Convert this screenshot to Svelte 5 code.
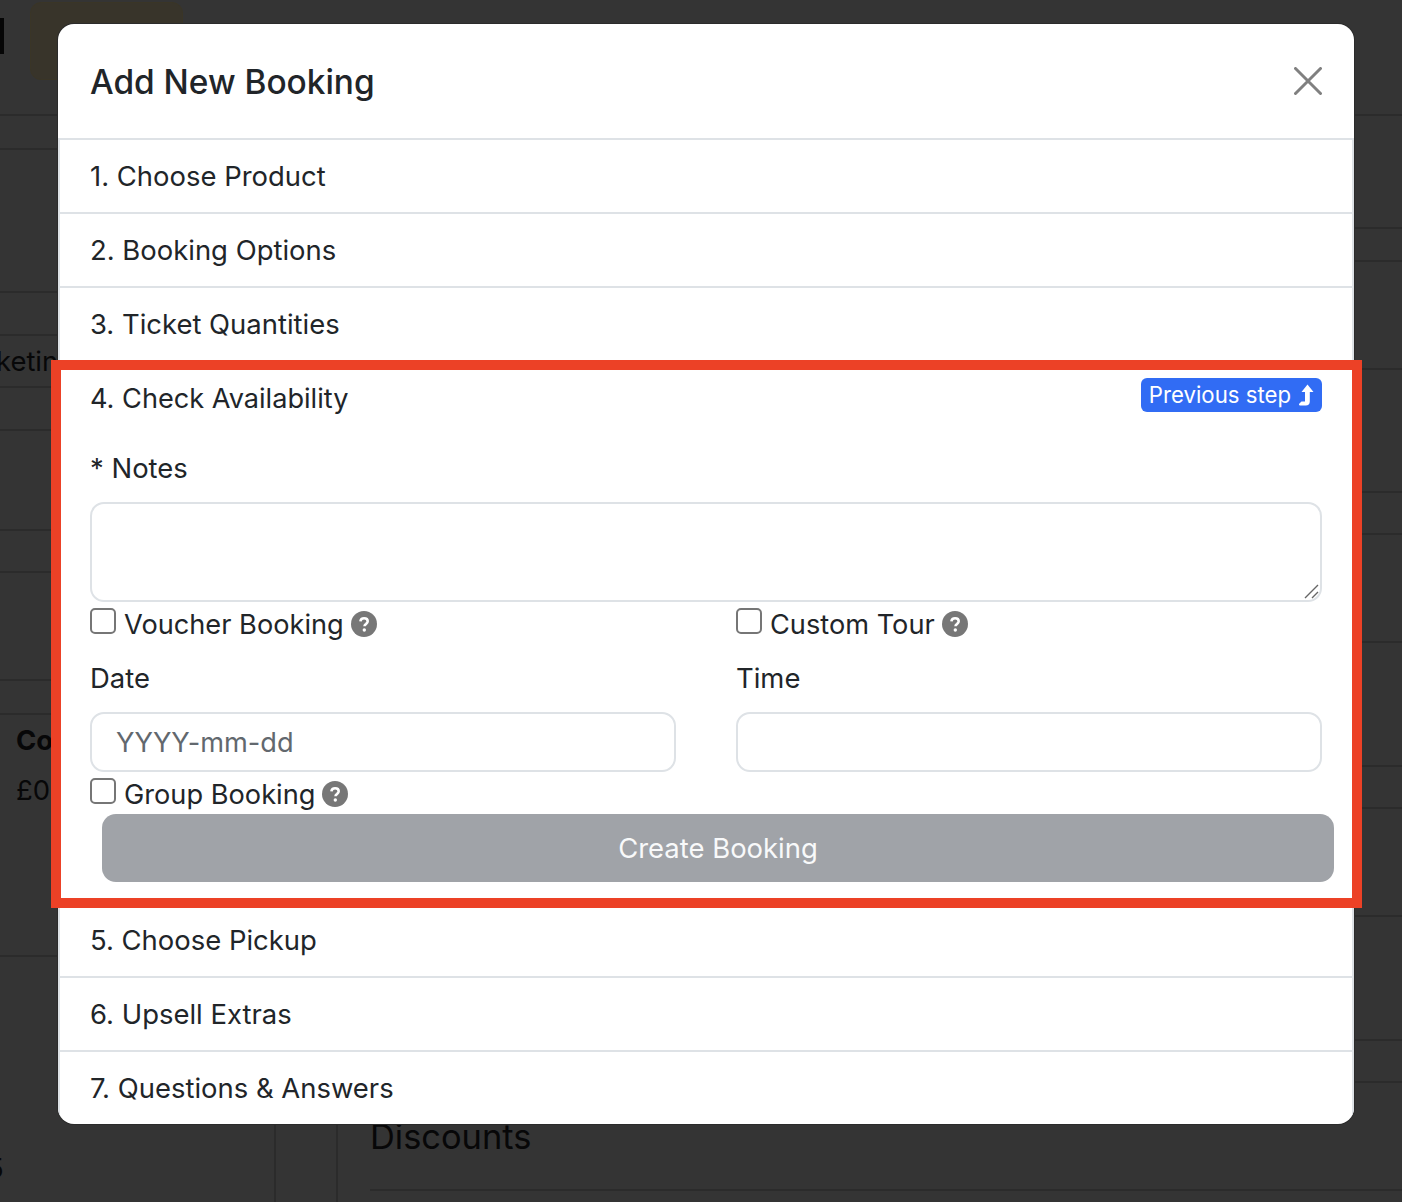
<script>
  // page behind the modal, already dimmed by the backdrop. Values are row heights.
  const leftRows = [
    { h: 34 }, { h: 143 }, { h: 43 },
    { h: 52, text: "Marketing", cls: "cut" },
    { h: 43 }, { h: 100 }, { h: 42 }, { h: 108 }, { h: 34 },
    { h: 242, card: true },
    { h: 246, text: "5", cls: "cut-five" }
  ];
  const rightRows = [113, 33, 108, 123, 42, 108, 124, 42, 108, 124, 42];
  const steps = ["1. Choose Product", "2. Booking Options", "3. Ticket Quantities"];
  const laterSteps = ["5. Choose Pickup", "6. Upsell Extras", "7. Questions & Answers"];
</script>

{#snippet help()}
  <svg class="help" viewBox="0 0 26 26" aria-hidden="true">
    <circle cx="13" cy="13" r="13" fill="#777" />
    <path d="M9.4 10.4c.2-2 1.7-3.1 3.7-3.1 2.1 0 3.6 1.2 3.6 3 0 1.4-.8 2.1-1.8 2.8-.9.6-1.4 1.1-1.4 2.2" fill="none" stroke="#fff" stroke-width="2.6" />
    <circle cx="13.3" cy="19" r="1.7" fill="#fff" />
  </svg>
{/snippet}

<div class="page">
  <header class="topbar">
    <span class="title-end"></span>
    <span class="top-btn"></span>
  </header>

  <div class="columns">
    <div class="col-left">
      {#each leftRows as row}
        <div class="bg-row" style="height: {row.h}px">
          {#if row.card}
            <div class="bg-card">
              <strong>Cost</strong>
              <span>£0.00</span>
            </div>
          {:else if row.text}
            <span class={row.cls}>{row.text}</span>
          {/if}
        </div>
      {/each}
    </div>
    <div class="col-mid"></div>
    <div class="col-right">
      {#each rightRows as h}
        <div class="bg-row" style="height: {h}px"></div>
      {/each}
      <div class="bg-row discounts">Discounts</div>
    </div>
  </div>

  <div class="modal">
    <div class="modal-head">
      <h5>Add New Booking</h5>
      <button class="close" aria-label="Close">
        <svg viewBox="0 0 28 28" width="28" height="28" aria-hidden="true">
          <path d="M1.5 1.5l25 25M26.5 1.5l-25 25" stroke="#808080" stroke-width="3" stroke-linecap="round" fill="none" />
        </svg>
      </button>
    </div>

    <div class="steps">
      {#each steps as s}
        <div class="step">{s}</div>
      {/each}

      <div class="step step-open">
        <div class="step-head">
          <span class="step-title">4. Check Availability</span>
          <a class="prev" href="#prev">
            Previous step
            <svg viewBox="0 0 16 24" width="16" height="24" aria-hidden="true">
              <path d="M9.5 1.5l6 7.5h-3.7v9.5c0 2.6-1.5 4-4 4H2c-1 0-1.4-1.2-.6-2l1.6-1.6c.3-.3.6-.4 1-.4h3V9H3.5z" fill="#fff" />
            </svg>
          </a>
        </div>

        <label class="notes-label" for="notes">* Notes</label>
        <div class="notes-wrap">
          <textarea id="notes"></textarea>
          <svg class="grip" viewBox="0 0 16 16" width="16" height="16" aria-hidden="true">
            <path d="M1 14L14 1M8 14l6-6" stroke="#666" stroke-width="1.4" fill="none" />
          </svg>
        </div>

        <div class="form-grid">
          <label class="check"><input type="checkbox" /><span>Voucher Booking</span>{@render help()}</label>
          <label class="check"><input type="checkbox" /><span>Custom Tour</span>{@render help()}</label>

          <div class="field">
            <label for="date">Date</label>
            <input id="date" type="text" placeholder="YYYY-mm-dd" />
          </div>
          <div class="field">
            <label for="time">Time</label>
            <input id="time" type="text" />
          </div>

          <label class="check low"><input type="checkbox" /><span>Group Booking</span>{@render help()}</label>
        </div>

        <button class="create" disabled>Create Booking</button>
      </div>

      {#each laterSteps as s}
        <div class="step">{s}</div>
      {/each}
    </div>
  </div>

  <div class="highlight"></div>
</div>

<style>
  :global(body) {
    margin: 0;
    background: #343434;
  }

  .page {
    position: relative;
    width: 1402px;
    height: 1202px;
    overflow: hidden;
    background: #343434;
    font-family: Inter, "Liberation Sans", sans-serif;
    font-size: 27.45px;
    line-height: 42px;
    color: #212529;
  }

  /* dimmed page */
  .topbar {
    display: flex;
    align-items: flex-start;
    gap: 26px;
    height: 116px;
    box-sizing: border-box;
    border-bottom: 2px solid #2b2b2b;
  }
  .title-end {
    width: 4px;
    height: 36px;
    margin-top: 18px;
    background: #050505;
  }
  .top-btn {
    width: 153px;
    height: 78px;
    margin-top: 2px;
    box-sizing: border-box;
    background: #38342a;
    border: 1px solid #3a3526;
    border-radius: 11px;
  }
  .columns {
    display: flex;
    height: 1086px;
  }
  .col-left {
    width: 276px;
    flex: none;
    box-sizing: border-box;
    border-right: 2px solid #2b2b2b;
    overflow: hidden;
    color: #070708;
  }
  .col-mid {
    width: 62px;
    flex: none;
    box-sizing: border-box;
    border-right: 2px solid #2b2b2b;
  }
  .col-right {
    flex: 1;
    padding-left: 32px;
  }
  .bg-row {
    box-sizing: border-box;
    border-bottom: 2px solid #2b2b2b;
  }
  .bg-row:last-child {
    border-bottom: 0;
  }
  .cut {
    display: block;
    padding-top: 4px;
    margin-left: -55px;
    white-space: nowrap;
  }
  .cut-five {
    display: block;
    padding-top: 190px;
    margin-left: -13px;
  }
  .bg-card {
    display: flex;
    flex-direction: column;
    gap: 8px;
    padding: 4px 16px;
  }
  .discounts {
    height: 108px;
    padding-top: 33px;
    font-size: 34.4px;
    line-height: 42px;
    color: #070708;
    border-bottom: 2px solid #2b2b2b !important;
  }

  /* modal */
  .modal {
    position: absolute;
    left: 58px;
    top: 24px;
    width: 1296px;
    height: 1100px;
    background: #fff;
    border-radius: 16px;
    overflow: hidden;
    box-shadow: 0 0 0 1px #2b2b2b;
  }
  .modal-head {
    display: flex;
    align-items: center;
    justify-content: space-between;
    height: 116px;
    box-sizing: border-box;
    padding: 1px 32px 0 32px;
    border-bottom: 2px solid #dee2e6;
  }
  .modal-head h5 {
    margin: 0;
    font-size: 33.4px;
    font-weight: 500;
    line-height: 42px;
  }
  .close {
    display: flex;
    padding: 0;
    border: 0;
    background: none;
    margin-top: -1px;
  }
  .steps {
    border-left: 2px solid #dee2e6;
    border-right: 2px solid #dee2e6;
  }
  .step {
    padding: 15px 30px;
    border-bottom: 2px solid #dee2e6;
  }
  .step:last-child {
    border-bottom: 0;
  }
  .step-open {
    padding-bottom: 20px;
  }
  .step-head {
    display: flex;
    justify-content: space-between;
    align-items: flex-start;
    height: 42px;
  }
  .step-title {
    padding-top: 1px;
    font-size: 27.15px;
  }
  .prev {
    display: flex;
    align-items: center;
    gap: 7px;
    height: 34px;
    margin-top: 1px;
    padding: 0 8px;
    font-size: 22.2px;
    line-height: 34px;
    color: #fff;
    background: #316cf4;
    border-radius: 6px;
    text-decoration: none;
  }
  .notes-label {
    display: block;
    margin-top: 28px;
    margin-bottom: 13px;
  }
  .notes-wrap {
    position: relative;
    height: 100px;
  }
  textarea {
    display: block;
    width: 100%;
    height: 100px;
    box-sizing: border-box;
    border: 2px solid #dee2e6;
    border-radius: 14px;
    resize: none;
    outline: none;
  }
  .grip {
    position: absolute;
    right: 2px;
    bottom: 2px;
  }
  .form-grid {
    display: grid;
    grid-template-columns: 586px 586px;
    column-gap: 60px;
    margin-top: 1px;
  }
  .check {
    display: flex;
    align-items: center;
    gap: 7px;
    height: 42px;
    font-size: 27.2px;
  }
  .check span {
    padding: 1px 0 0 1px;
    height: 41px;
  }
  .check.low {
    height: 43px;
    padding-top: 1px;
    box-sizing: border-box;
  }
  .check input {
    appearance: none;
    flex: none;
    width: 26px;
    height: 26px;
    margin: -6px 0 0;
    box-sizing: border-box;
    background: #fff;
    border: 2px solid #767676;
    border-radius: 5px;
  }
  .help {
    width: 26px;
    height: 26px;
    flex: none;
  }
  .field {
    padding-top: 12px;
  }
  .field label {
    display: block;
    margin-bottom: 13px;
  }
  .field input {
    display: block;
    width: 100%;
    height: 60px;
    box-sizing: border-box;
    padding: 0 24px;
    font: inherit;
    font-size: 27.2px;
    color: #212529;
    border: 2px solid #dee2e6;
    border-radius: 14px;
    outline: none;
  }
  .field input::placeholder {
    color: #62686e;
    opacity: 1;
  }
  .create {
    display: block;
    width: 1232px;
    height: 68px;
    margin: -1px 0 0 12px;
    padding: 0;
    font: inherit;
    color: #f8f9fa;
    background: #a0a3a8;
    border: 0;
    border-radius: 14px;
  }

  /* red annotation rectangle */
  .highlight {
    position: absolute;
    left: 51px;
    top: 360px;
    width: 1311px;
    height: 548px;
    box-sizing: border-box;
    border: 10px solid #ec4126;
  }
</style>
